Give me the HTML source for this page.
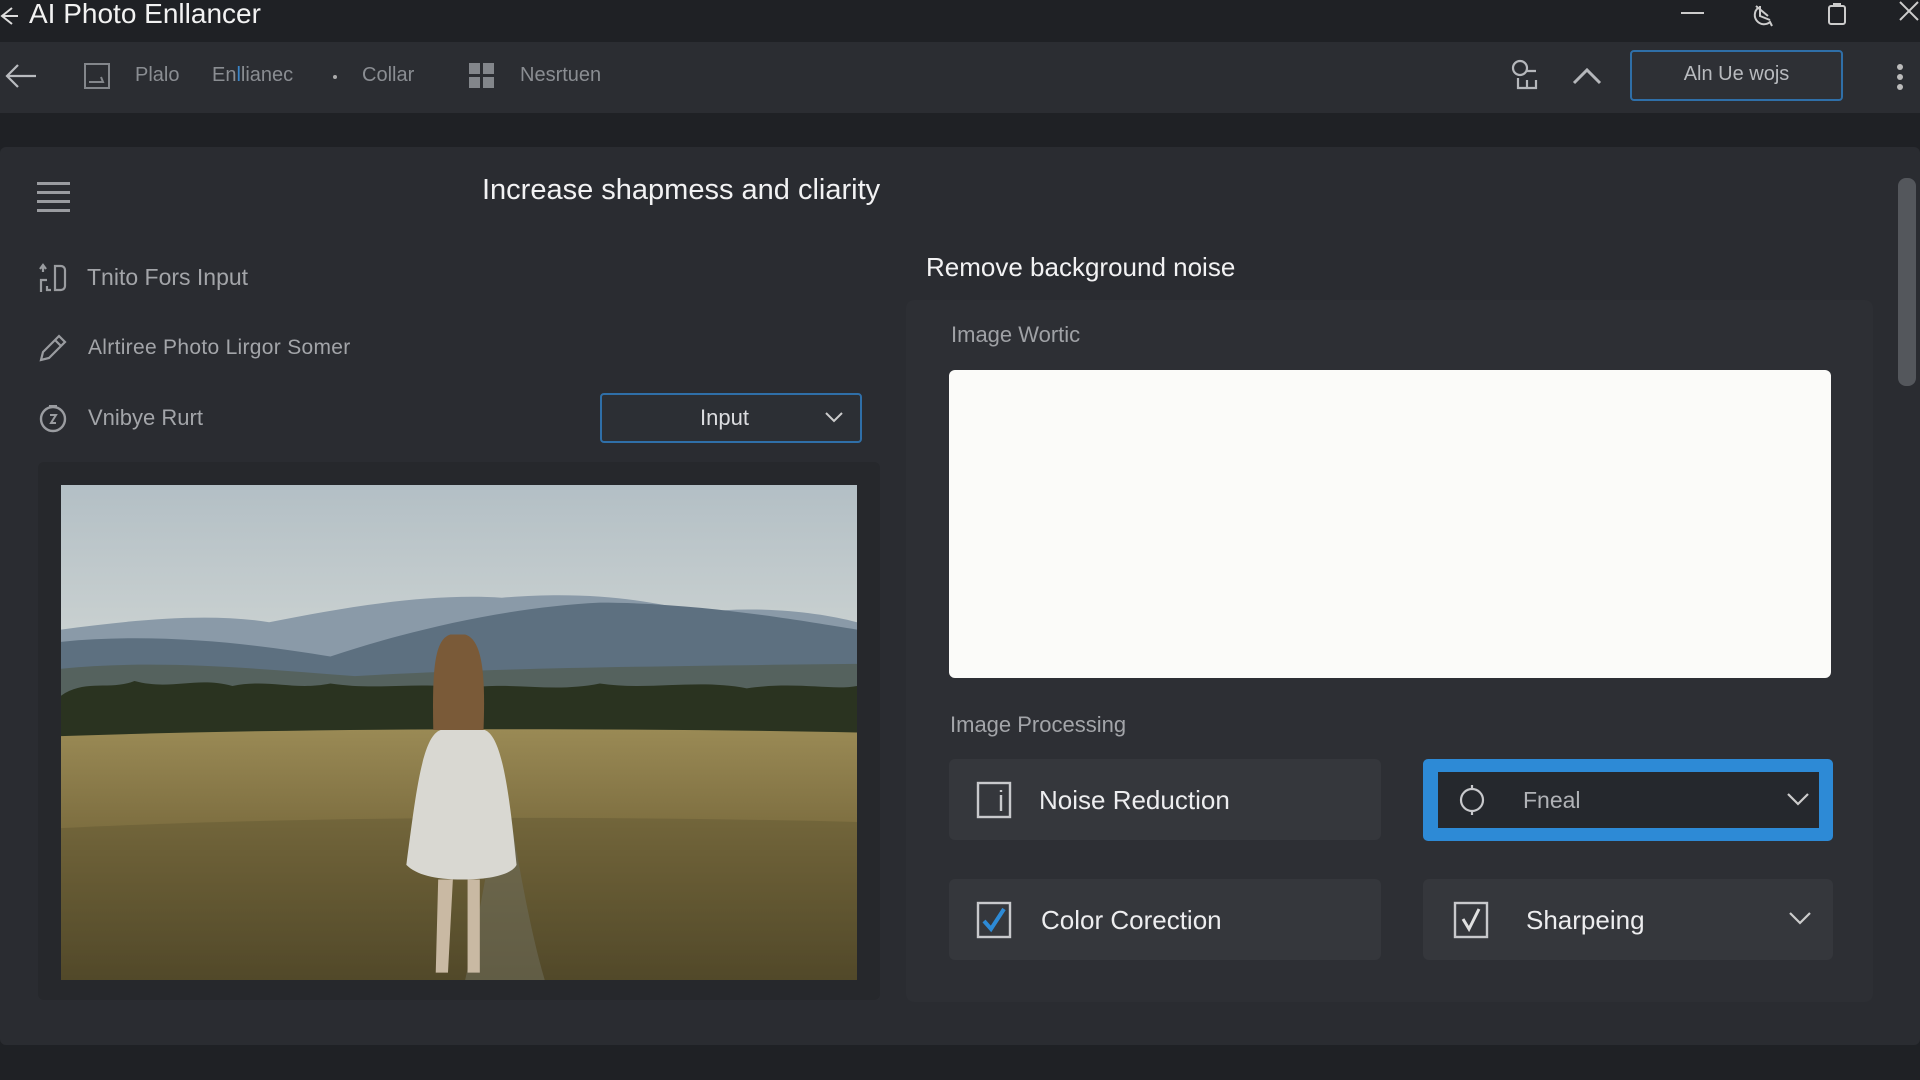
<!DOCTYPE html>
<html><head><meta charset="utf-8"><style>
*{margin:0;padding:0;box-sizing:border-box}
body{width:1920px;height:1080px;background:#1f2125;font-family:"Liberation Sans",sans-serif;position:relative;overflow:hidden;color:#e6e7e9}
.a{position:absolute}
.t{position:absolute;white-space:nowrap}
</style></head><body>
<div class="a" style="left:0;top:0;width:1920px;height:42px;background:#1f2125"></div>
<svg class="a" style="left:0;top:4px" width="20" height="24"><path d="M12 4 L2 12 L12 20 M2 12 H18" stroke="#ddd" stroke-width="2" fill="none"/></svg>
<div class="t" style="left:29px;top:-2px;font-size:28px;color:#f2f2f2">AI Photo Enllancer</div>
<div class="a" style="left:1681px;top:12px;width:23px;height:2px;background:#ccc"></div>
<svg class="a" style="left:1750px;top:2px" width="28" height="28"><path d="M6 4 L18 14 M8 6 A8 8 0 0 0 20 20 L22 24 M10 4 L10 14 L20 18" stroke="#ccc" stroke-width="2" fill="none"/></svg>
<svg class="a" style="left:1826px;top:2px" width="22" height="24"><rect x="3" y="4" width="16" height="18" rx="2" stroke="#ccc" stroke-width="2" fill="none"/><rect x="7" y="1" width="8" height="4" fill="#ccc"/></svg>
<svg class="a" style="left:1898px;top:0" width="22" height="24"><path d="M2 2 L20 20 M20 2 L2 20" stroke="#ccc" stroke-width="2"/></svg>
<div class="a" style="left:0;top:42px;width:1920px;height:71px;background:#2b2d32"></div>
<svg class="a" style="left:4px;top:62px" width="34" height="28"><path d="M14 3 L3 14 L14 25 M3 14 H32" stroke="#b9bbbf" stroke-width="2.2" fill="none"/></svg>
<svg class="a" style="left:83px;top:62px" width="28" height="28"><rect x="2" y="2" width="24" height="24" stroke="#83868b" stroke-width="2" fill="none"/><path d="M6 20 H20 L18 15" stroke="#83868b" stroke-width="2" fill="none"/></svg>
<div class="t" style="left:135px;top:64px;font-size:20px;color:#8a8d92">Plalo</div>
<div class="t" style="left:212px;top:64px;font-size:20px;color:#8a8d92">En<span style="color:#3a85c8">l</span>lianec</div>
<div class="a" style="left:333px;top:75px;width:4px;height:4px;border-radius:2px;background:#aaa"></div>
<div class="t" style="left:362px;top:64px;font-size:20px;color:#8a8d92">Collar</div>
<svg class="a" style="left:469px;top:63px" width="26" height="26"><rect x="0" y="0" width="11" height="11" fill="#83868b"/><rect x="14" y="0" width="11" height="11" fill="#83868b"/><rect x="0" y="14" width="11" height="11" fill="#83868b"/><rect x="14" y="14" width="11" height="11" fill="#83868b"/></svg>
<div class="t" style="left:520px;top:64px;font-size:20px;color:#8a8d92">Nesrtuen</div>
<svg class="a" style="left:1510px;top:58px" width="32" height="36"><circle cx="10" cy="10" r="7" stroke="#b5b7bb" stroke-width="2.2" fill="none"/><path d="M16 13 H26 M8 20 V30 H26 V22 M17 22 V30" stroke="#b5b7bb" stroke-width="2.2" fill="none"/></svg>
<svg class="a" style="left:1572px;top:66px" width="30" height="20"><path d="M2 17 L15 4 L28 17" stroke="#b5b7bb" stroke-width="3" fill="none"/></svg>
<div class="a" style="left:1630px;top:50px;width:213px;height:51px;border:2px solid #2f6fa8;border-radius:4px;background:#2e3035"></div>
<div class="t" style="left:1630px;width:213px;text-align:center;top:63px;font-size:20px;color:#b8babe">Aln Ue wojs</div>
<div class="a" style="left:1897px;top:64px;width:6px;height:6px;border-radius:3px;background:#bbb"></div>
<div class="a" style="left:1897px;top:74px;width:6px;height:6px;border-radius:3px;background:#bbb"></div>
<div class="a" style="left:1897px;top:84px;width:6px;height:6px;border-radius:3px;background:#bbb"></div>
<div class="a" style="left:0;top:147px;width:1920px;height:898px;background:#2a2c31;border-radius:6px"></div>
<div class="a" style="left:1898px;top:178px;width:18px;height:208px;background:#54575c;border-radius:8px"></div>
<div class="a" style="left:37px;top:182px;width:33px;height:3px;background:#9a9ca0;box-shadow:0 9px 0 #9a9ca0,0 18px 0 #9a9ca0,0 27px 0 #9a9ca0"></div>
<div class="t" style="left:482px;top:174px;font-size:29px;color:#f2f2f3">Increase shapmess and cliarity</div>
<svg class="a" style="left:37px;top:262px" width="32" height="32"><path d="M6 10 L6 4 M3 7 L6 3 L9 7 M4 30 V18 H10 M10 24 V28 H14 M18 4 H24 A4 4 0 0 1 28 8 V24 A4 4 0 0 1 24 28 H18 Z" stroke="#9a9ca0" stroke-width="2.2" fill="none"/></svg>
<div class="t" style="left:87px;top:264px;font-size:23px;color:#a3a5a9">Tnito Fors Input</div>
<svg class="a" style="left:37px;top:332px" width="32" height="32"><path d="M4 28 L6 20 L22 4 L28 10 L12 26 Z M18 8 L24 14" stroke="#9a9ca0" stroke-width="2.2" fill="none"/></svg>
<div class="t" style="left:88px;top:336px;font-size:21px;color:#a3a5a9;letter-spacing:0.3px">Alrtiree Photo Lirgor Somer</div>
<svg class="a" style="left:37px;top:402px" width="32" height="32"><circle cx="16" cy="17" r="12" stroke="#9a9ca0" stroke-width="2.4" fill="none"/><path d="M12 4 H20 M13 13 H19 L14 21 H19" stroke="#9a9ca0" stroke-width="2" fill="none"/></svg>
<div class="t" style="left:88px;top:405px;font-size:22px;color:#a3a5a9">Vnibye Rurt</div>
<div class="a" style="left:600px;top:393px;width:262px;height:50px;border:2px solid #2f6fa8;border-radius:4px;background:#2c2f34"></div>
<div class="t" style="left:700px;top:405px;font-size:22px;color:#dcdde0">Input</div>
<svg class="a" style="left:824px;top:410px" width="20" height="14"><path d="M2 3 L10 11 L18 3" stroke="#ccc" stroke-width="2" fill="none"/></svg>
<div class="a" style="left:38px;top:462px;width:842px;height:538px;background:#26282c;border-radius:6px"></div>
<svg class="a" style="left:61px;top:485px" width="796" height="495" viewBox="0 0 650 404" preserveAspectRatio="none">
<defs>
<linearGradient id="sky" x1="0" y1="0" x2="0" y2="1"><stop offset="0" stop-color="#b3bfc5"/><stop offset="0.5" stop-color="#d8dcd8"/><stop offset="1" stop-color="#e6e4dc"/></linearGradient>
<linearGradient id="fld" x1="0" y1="0" x2="0" y2="1"><stop offset="0" stop-color="#9a8a55"/><stop offset="0.4" stop-color="#7d6e40"/><stop offset="1" stop-color="#4e4527"/></linearGradient>
</defs>
<rect width="650" height="404" fill="url(#sky)"/>
<path d="M0 118 C60 110 120 104 170 112 C230 100 300 88 360 92 C430 86 480 94 520 104 C570 98 620 104 650 112 V200 H0 Z" fill="#8a9aa8"/>
<path d="M0 128 C80 120 160 130 220 140 C280 120 360 100 440 96 C520 96 600 110 650 118 V200 H0 Z" fill="#5d7080"/>
<path d="M0 150 C80 142 160 150 240 156 C340 150 460 148 650 146 V220 H0 Z" fill="#55625e"/>
<path d="M0 172 C20 158 40 168 60 160 C90 168 110 156 140 164 C170 158 190 168 220 162 C260 168 290 160 330 166 C370 160 400 170 440 162 C480 168 520 158 560 166 C600 160 630 168 650 164 V230 H0 Z" fill="#2a3320"/>
<path d="M0 205 C200 198 450 198 650 202 V404 H0 Z" fill="url(#fld)"/>
<path d="M0 280 C200 270 450 270 650 275 V404 H0 Z" fill="#5a4f2e" opacity="0.35"/>
<path d="M362 240 C372 300 382 360 395 404 H330 C340 360 350 300 362 240 Z" fill="#6d6a58" opacity="0.6"/>
<path d="M318 122 C305 126 303 150 304 200 L345 200 C347 150 343 126 330 122 Z" fill="#7a5a38"/>
<path d="M310 200 C295 205 290 250 282 310 C290 318 305 322 328 322 C350 322 368 318 372 310 C366 250 360 205 346 200 Z" fill="#d9d8d2"/>
<path d="M308 322 L306 398 L316 398 L320 322 Z M332 322 L332 398 L342 398 L342 322 Z" fill="#c9b9a3"/>
</svg>
<div class="t" style="left:926px;top:252px;font-size:26px;color:#f2f2f3">Remove background noise</div>
<div class="a" style="left:906px;top:300px;width:967px;height:702px;background:#2d2f34;border-radius:8px"></div>
<div class="t" style="left:951px;top:322px;font-size:22px;color:#9fa1a5">Image Wortic</div>
<div class="a" style="left:949px;top:370px;width:882px;height:308px;background:#fbfbf9;border-radius:6px"></div>
<div class="t" style="left:950px;top:712px;font-size:22px;color:#a3a5a9">Image Processing</div>
<div class="a" style="left:949px;top:759px;width:432px;height:81px;background:#35373c;border-radius:6px"></div>
<svg class="a" style="left:976px;top:781px" width="36" height="38"><rect x="2" y="2" width="32" height="34" stroke="#c8c9cc" stroke-width="2.4" fill="none"/><path d="M25 14 V30 M25 9 V11" stroke="#c8c9cc" stroke-width="2.4"/></svg>
<div class="t" style="left:1039px;top:785px;font-size:26px;color:#ededef">Noise Reduction</div>
<div class="a" style="left:1423px;top:759px;width:410px;height:82px;background:#2d8ad6;border-radius:5px"></div>
<div class="a" style="left:1438px;top:772px;width:381px;height:56px;background:#25282d"></div>
<svg class="a" style="left:1457px;top:783px" width="30" height="34"><circle cx="15" cy="17" r="11" stroke="#c8c9cc" stroke-width="2.2" fill="none"/><path d="M15 2 V6 M15 28 V32" stroke="#c8c9cc" stroke-width="2.2"/></svg>
<div class="t" style="left:1523px;top:787px;font-size:23px;color:#b0b2b6">Fneal</div>
<svg class="a" style="left:1786px;top:791px" width="24" height="16"><path d="M2 3 L12 13 L22 3" stroke="#ccc" stroke-width="2.2" fill="none"/></svg>
<div class="a" style="left:949px;top:879px;width:432px;height:81px;background:#35373c;border-radius:6px"></div>
<svg class="a" style="left:976px;top:901px" width="36" height="38"><rect x="2" y="2" width="32" height="34" stroke="#c8c9cc" stroke-width="2.4" fill="none"/><path d="M8 20 L15 28 L28 8" stroke="#2d8ad6" stroke-width="4" fill="none"/></svg>
<div class="t" style="left:1041px;top:905px;font-size:26px;color:#ededef">Color Corection</div>
<div class="a" style="left:1423px;top:879px;width:410px;height:81px;background:#35373c;border-radius:6px"></div>
<svg class="a" style="left:1453px;top:901px" width="36" height="38"><rect x="2" y="2" width="32" height="34" stroke="#c8c9cc" stroke-width="2.4" fill="none"/><path d="M10 18 L16 28 L26 8" stroke="#e0e0e0" stroke-width="3" fill="none"/></svg>
<div class="t" style="left:1526px;top:905px;font-size:26px;color:#ededef">Sharpeing</div>
<svg class="a" style="left:1788px;top:910px" width="24" height="16"><path d="M2 3 L12 13 L22 3" stroke="#ccc" stroke-width="2.2" fill="none"/></svg>
</body></html>
